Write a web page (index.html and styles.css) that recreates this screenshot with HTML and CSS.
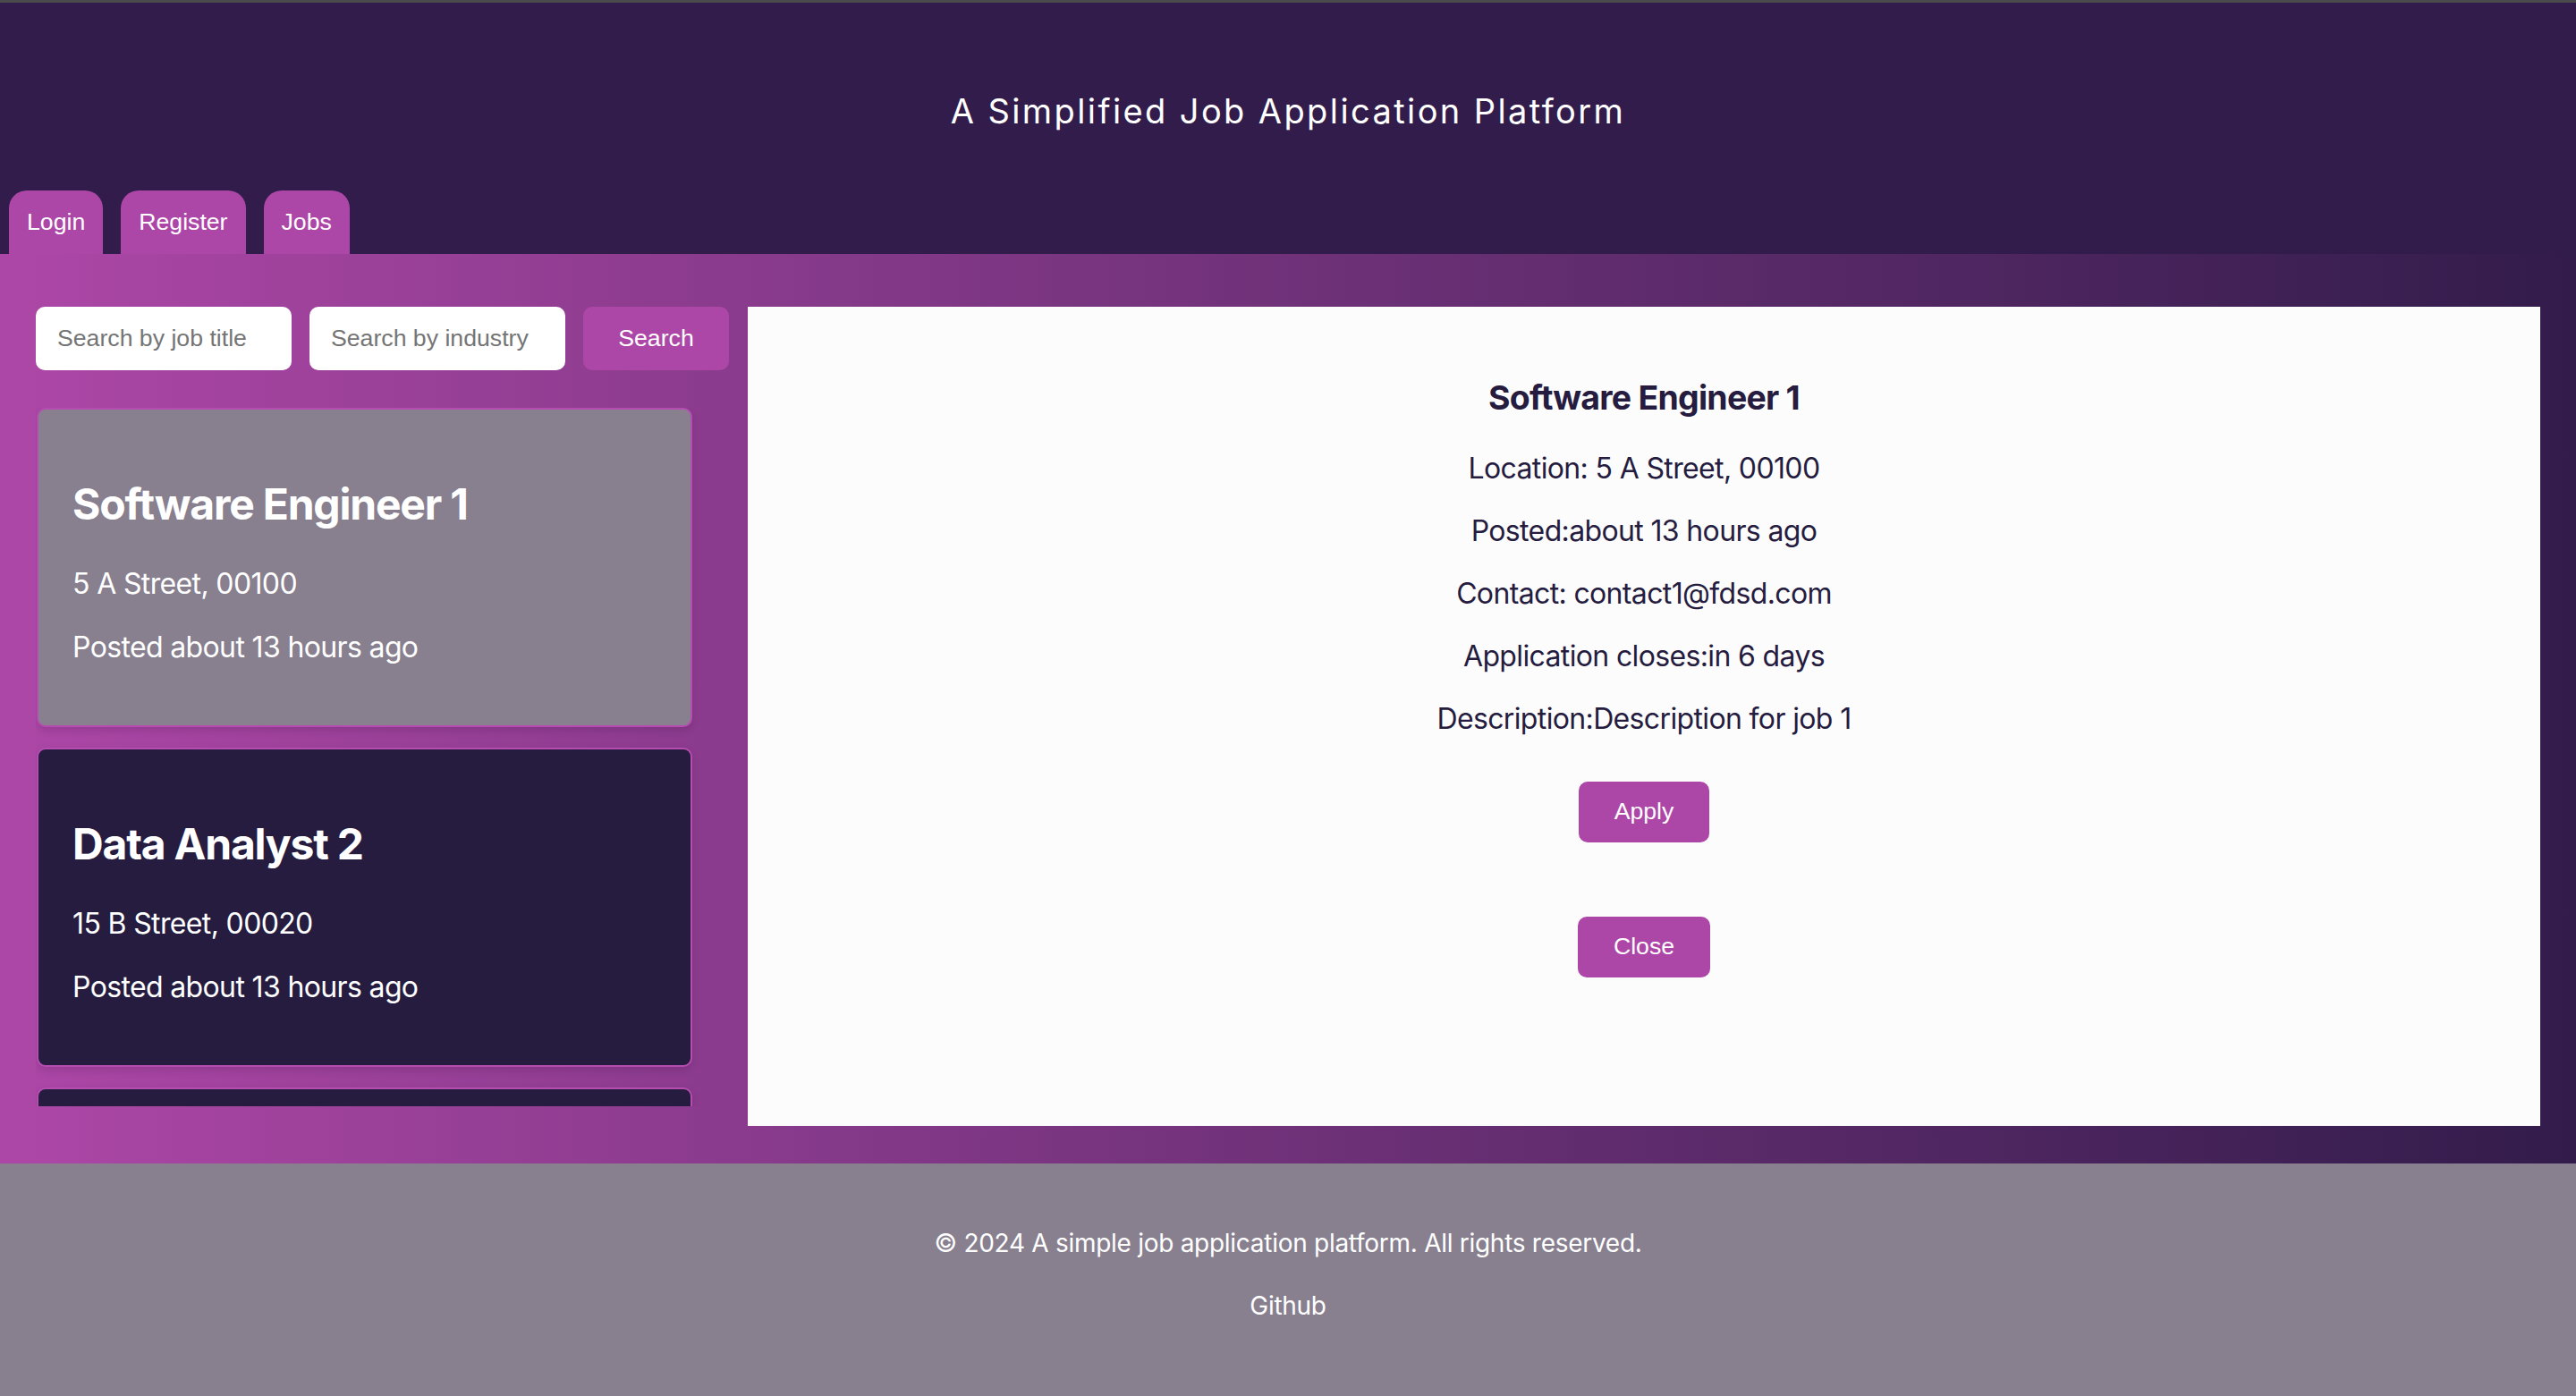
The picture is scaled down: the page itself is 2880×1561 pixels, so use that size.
FILE: index.html
```html
<!DOCTYPE html>
<html lang="en">
<head>
<meta charset="utf-8">
<title>A Simplified Job Application Platform</title>
<link rel="stylesheet" href="styles.css">
</head>
<body>
<header class="site-header">
  <h1 class="site-title">A Simplified Job Application Platform</h1>
  <nav class="tabs">
    <button class="tab">Login</button>
    <button class="tab">Register</button>
    <button class="tab">Jobs</button>
  </nav>
</header>
<main class="main">
  <section class="left-col">
    <div class="search-row">
      <input class="search-input" type="text" placeholder="Search by job title">
      <input class="search-input" type="text" placeholder="Search by industry">
      <button class="search-btn">Search</button>
    </div>
    <div class="job-list">
      <article class="job-card job-card--active">
        <h2 class="job-title">Software Engineer 1</h2>
        <p class="job-meta">5 A Street, 00100</p>
        <p class="job-meta">Posted about 13 hours ago</p>
      </article>
      <article class="job-card">
        <h2 class="job-title">Data Analyst 2</h2>
        <p class="job-meta">15 B Street, 00020</p>
        <p class="job-meta">Posted about 13 hours ago</p>
      </article>
      <article class="job-card">
        <h2 class="job-title">Product Manager 3</h2>
        <p class="job-meta">25 C Street, 00030</p>
        <p class="job-meta">Posted about 13 hours ago</p>
      </article>
    </div>
  </section>
  <section class="detail">
    <h3 class="detail-title">Software Engineer 1</h3>
    <p class="detail-line">Location: 5 A Street, 00100</p>
    <p class="detail-line">Posted:about 13 hours ago</p>
    <p class="detail-line">Contact: contact1@fdsd.com</p>
    <p class="detail-line">Application closes:in 6 days</p>
    <p class="detail-line">Description:Description for job 1</p>
    <div class="detail-actions">
      <button class="action-btn">Apply</button>
      <button class="action-btn">Close</button>
    </div>
  </section>
</main>
<footer class="site-footer">
  <p class="footer-line">© 2024 A simple job application platform. All rights reserved.</p>
  <p class="footer-line"><a class="footer-link" href="#">Github</a></p>
</footer>
</body>
</html>
```

FILE: styles.css
```css
html, body {
  margin: 0;
  padding: 0;
}
body {
  font-family: Inter, "Noto Sans", sans-serif;
  background: #88808f;
}

.site-header {
  background: #321c4b;
  border-top: 3px solid #4b4a4c;
  padding-top: 97px;
}
.site-title {
  margin: 0;
  text-align: center;
  color: #ffffff;
  font-family: Inter, sans-serif;
  font-weight: 400;
  font-size: 38px;
  line-height: 48px;
  letter-spacing: 2.4px;
}
.tabs {
  display: flex;
  gap: 20px;
  padding-left: 10px;
  margin-top: 65px;
}
.tab {
  height: 71px;
  padding: 0 20px;
  border: none;
  border-radius: 20px 20px 0 0;
  background: #ad47a7;
  color: #ffffff;
  font-family: "Liberation Sans", Arial, sans-serif;
  font-size: 26.67px;
}

.main {
  display: flex;
  gap: 21px;
  padding: 59px 40px 42px 40px;
  background: linear-gradient(to right, #ad47a7, #321c4b);
}
.left-col {
  width: 775px;
  flex: none;
  display: flex;
  flex-direction: column;
}
.search-row {
  display: flex;
  gap: 20px;
  height: 71px;
}
.search-input {
  width: 286px;
  height: 71px;
  box-sizing: border-box;
  padding: 0 24px;
  border: none;
  border-radius: 10px;
  background: #ffffff;
  font-family: "Liberation Sans", Arial, sans-serif;
  font-size: 26.67px;
  color: #222;
  outline: none;
}
.search-input::placeholder {
  color: #757575;
}
.search-btn {
  width: 163px;
  height: 71px;
  border: none;
  border-radius: 10px;
  background: #ad47a7;
  color: #ffffff;
  font-family: "Liberation Sans", Arial, sans-serif;
  font-size: 26.67px;
}
.job-list {
  margin-top: 42px;
  margin-bottom: 22px;
  height: 781px;
  overflow: hidden;
  display: flex;
  flex-direction: column;
  gap: 23px;
  padding-left: 1px;
}
.job-card {
  flex: none;
  width: 733px;
  box-sizing: border-box;
  padding: 36px 38px;
  border: 2px solid #b54db1;
  border-radius: 10px;
  background: #251c3f;
  color: #ffffff;
  box-shadow: 0 4px 10px rgba(40, 10, 50, 0.15);
}
.job-card--active {
  background: #88808f;
}
.job-title {
  margin: 40px 0;
  font-size: 48px;
  font-weight: 700;
  letter-spacing: -1.2px;
}
.job-meta {
  margin: 32px 0;
  font-size: 32px;
  letter-spacing: -0.02em;
}

.detail {
  flex: 1;
  background: #fdfcfd;
  padding: 42px 40px 40px;
  text-align: center;
  color: #251c3f;
}
.detail-title {
  margin: 37.44px 0;
  font-size: 37.44px;
  font-weight: 700;
  letter-spacing: -0.02em;
}
.detail-line {
  margin: 32px 0;
  font-size: 32px;
  line-height: 38px;
  letter-spacing: -0.02em;
}
.detail-actions {
  margin-top: 51px;
  display: flex;
  flex-direction: column;
  align-items: center;
  gap: 83px;
}
.action-btn {
  height: 68px;
  padding: 0 40px;
  border: none;
  border-radius: 10px;
  background: #ad47a7;
  color: #ffffff;
  font-family: "Liberation Sans", Arial, sans-serif;
  font-size: 26.67px;
}

.site-footer {
  background: #88808f;
  color: #ffffff;
  text-align: center;
  padding: 38px 0 60px;
}
.footer-line {
  margin: 32px 0;
  font-size: 28px;
  line-height: 38px;
  letter-spacing: -0.01em;
}
.footer-link {
  color: #ffffff;
  text-decoration: none;
}
```
